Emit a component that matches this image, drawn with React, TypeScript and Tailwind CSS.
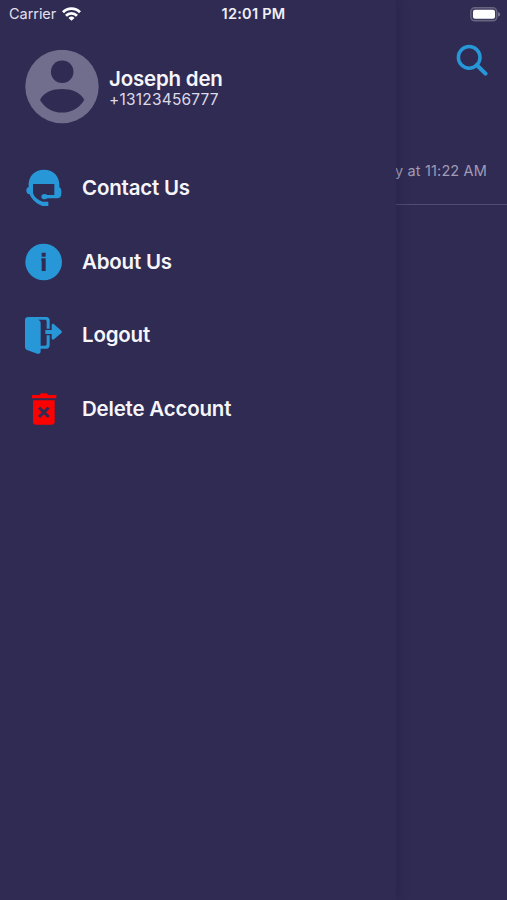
import type { ReactNode } from "react";

function WifiIcon() {
  return (
    <svg className="h-[14px] w-[19px]" viewBox="0 0 19 14" fill="none" stroke="#fff" strokeWidth="2.8">
      <path d="M1 5.2a12 12 0 0 1 17 0" />
      <path d="M4 8.7a7.8 7.8 0 0 1 11 0" />
      <path d="M9.5 13.8 6.5 11a4.3 4.3 0 0 1 6 0Z" fill="#fff" stroke="none" />
    </svg>
  );
}

function BatteryIcon() {
  return (
    <svg className="h-[15px] w-[31px]" viewBox="0 0 31 15">
      <rect x="0.8" y="0.8" width="26" height="13" rx="3.8" fill="#3f3a60" stroke="#68637f" strokeWidth="1.4" />
      <rect x="3" y="2.8" width="22" height="9" rx="2" fill="#fff" />
      <path d="M28 5v4.600c1.300-.4 2.200-1.300 2.200-2.300S29.300 5.400 28 5Z" fill="#77728f" />
    </svg>
  );
}

function AvatarIcon() {
  return (
    <svg className="h-[74px] w-[74px]" viewBox="0 0 74 74">
      <circle cx="37" cy="36.500" r="36.700" fill="#716d8d" />
      <circle cx="37.200" cy="21.800" r="11.300" fill="#302b53" />
      <path d="M15 50C18.500 42 28 39 37 39s18.500 3 22.300 11C54.500 58 46.500 62.600 37 62.600S19.500 58 15 50Z" fill="#302b53" />
    </svg>
  );
}

function SearchIcon() {
  return (
    <svg className="h-[32px] w-[32px]" viewBox="0 0 32 32" fill="none" stroke="#2797d8">
      <circle cx="13.200" cy="13.400" r="10.800" strokeWidth="3.500" />
      <path d="M20.800 21 29.500 29.700" strokeWidth="4" strokeLinecap="round" />
    </svg>
  );
}

function SupportIcon() {
  return (
    <svg className="h-10 w-10" viewBox="30 24 120 120" fill="#2797d8">
      <path d="M41 81C38 50 58 29 87 29s49 21 46 53c4 2 6 6 6 11v8c0 9-5 14-13 14H97c-2 2-5 3-8 3-6 0-10-3-10-8s4-8 10-8c3 0 6 1 8 3h21V72H54v28c5 13 15 20 29 25h17v13H82c-17-6-32-19-38-35-6-1-10-5-10-11s3-9 7-11Z" />
    </svg>
  );
}

function InfoIcon() {
  return (
    <svg className="h-10 w-10" viewBox="30 20 120 120">
      <circle cx="86" cy="80" r="55" fill="#2797d8" />
      <path d="M80 52h12v12H80zM79 69h13v38H80V77h-1Z" fill="#302b53" />
    </svg>
  );
}

function LogoutIcon() {
  return (
    <svg className="h-10 w-10" viewBox="30 24 120 120" fill="#2797d8">
      <path d="M39 27h55c6 0 10 4 10 10v25h-9V40c0-3-2-5-5-5H69c5 2 8 5 8 10v68h13c3 0 5-2 5-5V82h9v29c0 7-4 11-10 11H77v8c0 6-4 9-10 7l-29-10c-5-2-8-5-8-10V36c0-6 4-9 9-9Z" />
      <path d="M91 66h19V52c0-4 4-6 7-3l22 19c2 2 2 5 0 7l-22 19c-3 3-7 1-7-3V78H91Z" />
    </svg>
  );
}

function DeleteIcon() {
  return (
    <svg className="h-10 w-10" viewBox="30 21 120 120">
      <path d="M51 39h22l5-5h17l5 5h24v10H51ZM54 55h65v64c0 6-3 9-9 9H63c-6 0-9-3-9-9Z" fill="#fe0000" />
      <path d="m72 77 29 28m0-28-29 28" stroke="#302b53" strokeWidth="9" />
    </svg>
  );
}

function MenuItem({ icon, label }: { icon: ReactNode; label: ReactNode }) {
  return (
    <li className="flex h-[73.67px] items-center gap-[17px]">
      {icon}
      {label}
    </li>
  );
}

function StatusBar() {
  return (
    <div className="absolute inset-x-0 top-0 z-20 flex h-7 items-center justify-between pl-[9px] pr-[6px] text-white">
      <div className="flex flex-1 items-center gap-[6px]">
        <span className="text-[14.5px] leading-none tracking-[-0.05px] text-[#e2e0ec]">Carrier</span>
        <WifiIcon />
      </div>
      <span className="mr-[3px] text-[14.5px] font-semibold leading-none tracking-[0.25px] text-[#f1f0f7]">
        12:01 PM
      </span>
      <div className="flex flex-1 justify-end">
        <BatteryIcon />
      </div>
    </div>
  );
}

function Drawer() {
  return (
    <aside className="absolute inset-y-0 left-0 z-10 w-[396px] bg-[#302b53] pl-[25px] pt-[50px] shadow-[2px_0_10px_rgba(20,15,60,0.25)]">
      <div className="flex h-[74px] items-center gap-[10px]">
        <AvatarIcon />
        <div className="pt-[2px]">
          <p className="text-[20.5px] font-[560] leading-[23px] tracking-[-0.2px] text-[#f6f5fa]">Joseph den</p>
          <p className="text-[15.5px] leading-5 tracking-[0.2px] text-[#dcdae8]">+13123456777</p>
        </div>
      </div>
      <ul className="mt-[27.5px] text-[20.5px] font-[560] tracking-[-0.2px] text-[#f6f5fa]">
        <MenuItem icon={<SupportIcon />} label={<span>Contact Us</span>} />
        <MenuItem icon={<InfoIcon />} label={<span>About Us</span>} />
        <MenuItem icon={<LogoutIcon />} label={<span>Logout</span>} />
        <MenuItem icon={<DeleteIcon />} label={<span>Delete Account</span>} />
      </ul>
    </aside>
  );
}

export default function App() {
  return (
    <div className="relative h-[900px] w-[507px] overflow-hidden bg-[#302b53] font-['Inter',sans-serif]">
      <StatusBar />
      <Drawer />
      <main>
        <div className="flex justify-end pr-[19px] pt-[44px]">
          <SearchIcon />
        </div>
        <div className="flex h-[129px] items-end justify-end border-b border-[#514c70] pb-[23px] pr-5">
          <p className="text-[14.5px] leading-5 tracking-[0.15px] text-[#a09cb5]">Today at 11:22 AM</p>
        </div>
      </main>
    </div>
  );
}
